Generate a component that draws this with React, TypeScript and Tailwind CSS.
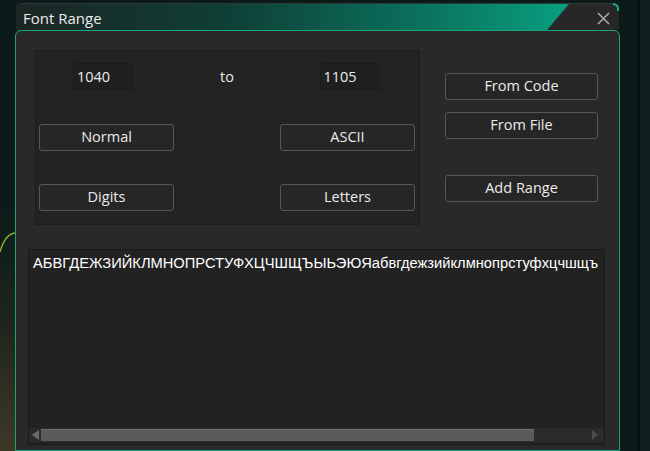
import React from "react";

function Btn({ label, w }: { label: string; w: string }) {
  return (
    <button
      className={`${w} h-[27px] rounded-[3px] border border-[#575757] bg-[#262626] text-[14.5px] leading-none text-[#ebebeb]`}
    >
      {label}
    </button>
  );
}

function NumBox({ value }: { value: string }) {
  return (
    <div className="w-[60px] h-[27px] rounded-[2px] border border-[#1c1c1c] bg-[#1f1f1f] pl-[3px] flex items-center text-[14.5px] text-[#ebebeb]">
      {value}
    </div>
  );
}

export default function App() {
  const text = "АБВГДЕЖЗИЙКЛМНОПРСТУФХЦЧШЩЪЫЬЭЮЯабвгдежзийклмнопрстуфхцчшщъ";

  return (
    <div className="relative w-[650px] h-[451px] overflow-hidden bg-[#0c1a19] font-['Open_Sans',sans-serif]">
      {/* desktop behind the window */}
      <div className="absolute inset-0 bg-[radial-gradient(ellipse_40%_55%_at_0%_100%,#3f3826_0%,#1d241b_55%,transparent_100%)]" />
      <svg className="absolute left-0 top-[225px]" width="20" height="40">
        <path d="M0 27 Q5 9 15 8" stroke="#8fb026" strokeWidth="1.4" fill="none" />
      </svg>
      <div className="absolute top-0 bottom-0 left-[638px] w-[2px] bg-[#081111]" />
      <div className="absolute top-0 bottom-0 left-[640px] right-0 bg-[#0e1e1d]" />

      <div className="relative ml-[15px] pt-[3px] w-[605px] h-full flex flex-col">
        {/* title bar */}
        <div className="relative ml-[1px] mr-[1px] h-[27px] rounded-t-[6px] bg-[linear-gradient(to_right,#1c2523_0%,#0f3f36_35%,#0a6e5a_65%,#07a07f_92%)] border-t border-[#2c3a37]">
          <span className="absolute left-[7px] top-[3px] text-[15px] text-[#ececec]">
            Font Range
          </span>
          <div className="absolute right-0 top-0 h-full w-[72px] rounded-tr-[6px] bg-[#272727] [clip-path:polygon(22px_0,100%_0,100%_100%,0_100%)]" />
          <div className="absolute right-0 top-[-1px] w-[6px] h-[8px] rounded-tr-[6px] border-t-2 border-r-2 border-[#10b285]" />
          <svg className="absolute right-[9px] top-[8px]" width="13" height="13" viewBox="0 0 13 13">
            <path d="M1 1 L12 12 M12 1 L1 12" stroke="#a8a8a8" strokeWidth="1.6" />
          </svg>
        </div>

        {/* body */}
        <div className="flex-1 rounded-t-[6px] border border-[#17a679] bg-[#292929] pl-[12px] pt-[19px]">
          <div className="ml-[7px] flex">
            {/* range panel */}
            <div className="w-[385px] h-[175px] border border-[#1d1d1d] bg-[#232323] pl-[3px] pr-[4px] pt-[12px]">
              <div className="grid grid-cols-[135px_1fr_135px] items-center">
                <div className="pl-[34px]">
                  <NumBox value="1040" />
                </div>
                <div className="text-center text-[14.5px] text-[#ebebeb]">to</div>
                <div className="flex justify-center pl-[4px]">
                  <NumBox value="1105" />
                </div>
              </div>
              <div className="mt-[34px] flex justify-between">
                <Btn label="Normal" w="w-[135px]" />
                <Btn label="ASCII" w="w-[135px]" />
              </div>
              <div className="mt-[33px] flex justify-between">
                <Btn label="Digits" w="w-[135px]" />
                <Btn label="Letters" w="w-[135px]" />
              </div>
            </div>

            {/* actions */}
            <div className="ml-[25px] pt-[23px] flex flex-col">
              <Btn label="From Code" w="w-[153px]" />
              <div className="mt-[12px]">
                <Btn label="From File" w="w-[153px]" />
              </div>
              <div className="mt-[36px]">
                <Btn label="Add Range" w="w-[153px]" />
              </div>
            </div>
          </div>

          {/* preview */}
          <div className="mt-[24px] w-[577px] h-[196px] border border-[#1b1b1b] bg-[#222222] flex flex-col">
            <div className="flex-1 overflow-hidden whitespace-nowrap pl-[4px] pt-[2px] font-['Liberation_Sans',Arial,sans-serif] text-[14.7px] text-white">
              {text}
            </div>
            <div className="mb-[2px] h-[14px] bg-[#2b2b2b] flex items-center">
              <div className="w-[12px] h-full flex items-center justify-center">
                <svg width="7" height="10" viewBox="0 0 7 10">
                  <path d="M7 0 L0 5 L7 10 Z" fill="#6b6b6b" />
                </svg>
              </div>
              <div className="w-[493px] h-[12px] bg-[#5b5b5b] border-t border-[#6c6c6c]" />
              <div className="flex-1" />
              <div className="w-[12px] h-full flex items-center justify-center mr-[3px]">
                <svg width="6" height="10" viewBox="0 0 6 10">
                  <path d="M0 0 L6 5 L0 10 Z" fill="#4d4d4d" />
                </svg>
              </div>
            </div>
          </div>
        </div>
      </div>
    </div>
  );
}
